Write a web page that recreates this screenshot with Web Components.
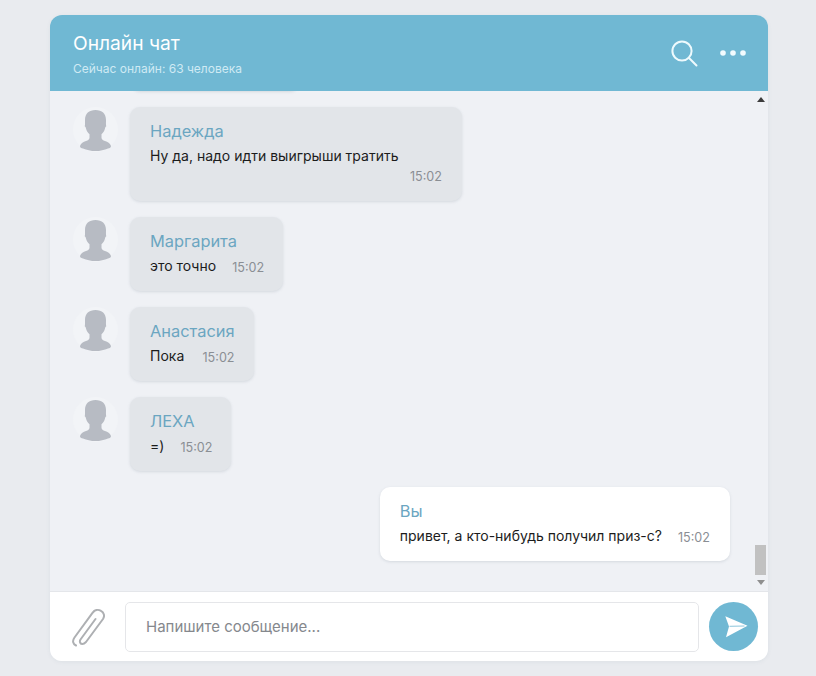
<!DOCTYPE html>
<html lang="ru"><head><meta charset="utf-8"><title>Онлайн чат</title>
<style>
html,body{margin:0;height:100%}
body{background:#e9ebef;font-family:Inter,"Liberation Sans",sans-serif;padding:15px 48px 15px 50px;box-sizing:border-box;overflow:hidden}
</style></head><body>
<chat-window>
  <chat-header slot="header" title-text="Онлайн чат" sub="Сейчас онлайн: 63 человека"></chat-header>
  <chat-bubble ghost></chat-bubble>
  <chat-bubble name="Надежда" time="15:02" wide>Ну да, надо идти выигрыши тратить</chat-bubble>
  <chat-bubble name="Маргарита" time="15:02">это точно</chat-bubble>
  <chat-bubble name="Анастасия" time="15:02">Пока</chat-bubble>
  <chat-bubble name="ЛЕХА" time="15:02">=)</chat-bubble>
  <chat-bubble name="Вы" time="15:02" own>привет, а кто-нибудь получил приз-с?</chat-bubble>
  <chat-composer slot="footer" placeholder="Напишите сообщение..."></chat-composer>
</chat-window>
<script>
const FONT='Inter,"Liberation Sans",sans-serif';
function el(name, html){
  customElements.define(name, class extends HTMLElement{
    connectedCallback(){
      if(this.shadowRoot) return;
      const s=this.attachShadow({mode:'open'});
      s.innerHTML=typeof html==='function'?html(this):html;
    }
  });
}
el('chat-window',`<style>
:host{display:flex;flex-direction:column;height:646px;width:718px;border-radius:12px;overflow:hidden;background:#eff1f5;box-shadow:0 1px 4px rgba(90,110,130,.08)}
.body{flex:1;min-height:0;display:flex}
.list{flex:1;min-width:0;display:flex;flex-direction:column;justify-content:flex-end;gap:16px;padding:0 23px 30px;overflow:hidden;box-sizing:border-box}
.bar{width:15px;flex:none;display:flex;flex-direction:column;align-items:center;box-sizing:border-box}
.up{margin-top:6px;width:0;height:0;border:4px solid transparent;border-top:0;border-bottom:5px solid #3c3c3c}
.sp{flex:1}
.thumb{width:11px;height:30px;background:#c1c1c1;margin-bottom:5px}
.down{margin-bottom:6px;width:0;height:0;border:4px solid transparent;border-bottom:0;border-top:5px solid #8f8f8f}
</style>
<slot name="header"></slot>
<div class="body"><div class="list"><slot></slot></div>
<div class="bar"><div class="up"></div><div class="sp"></div><div class="thumb"></div><div class="down"></div></div></div>
<slot name="footer"></slot>`);
el('chat-header',h=>`<style>
:host{display:flex;align-items:center;height:76px;flex:none;background:#70b8d3;color:#fff;padding:0 22px 0 23px;box-sizing:border-box}
.t{flex:1;display:flex;flex-direction:column;padding-top:1px}
h1{margin:0;font:400 19.2px/24px ${FONT}}
p{margin:6px 0 0;font:400 12px/16px ${FONT};color:#cfeaf3}
.ic{display:flex;align-items:center;gap:22px}
svg{display:block}
</style>
<div class="t"><h1>${h.getAttribute('title-text')}</h1><p>${h.getAttribute('sub')}</p></div>
<div class="ic">
<svg width="27" height="27" viewBox="0 0 27 27" fill="none" stroke="#eefafd" stroke-width="2"><circle cx="11" cy="11" r="9.6"/><path d="M17.8 17.8 25.500 25.500" stroke-linecap="round"/></svg>
<svg width="26" height="6" viewBox="0 0 26 6" fill="#f2fbfe"><circle cx="3" cy="3" r="2.8"/><circle cx="13" cy="3" r="2.8"/><circle cx="23" cy="3" r="2.8"/></svg>
</div>`);
el('chat-avatar',`<style>
:host{display:block;width:45px;height:45px;border-radius:50%;background:#f2f4f7;flex:none}
svg{display:block}
</style><svg width="45" height="45" viewBox="0 0 45 45" fill="#b7bbc3"><path d="M22.5 3c-6.500 0-10.500 3.500-10.500 10 0 3 .2 5-.3 6.200 1 .5 1 1.300 1.300 2.300.6 2.400 1.800 4.300 3.500 5.800v3.400c0 1.600-1.500 2.500-3.500 3.300-2.800 1.100-5 2.300-5.800 4.500-.4 1-.3 2.500 2.800 2.900 3.500 1.500 8 2.600 12.500 2.600s9-1.100 12.500-2.600c3.100-.4 3.200-1.900 2.800-2.900-.8-2.200-3-3.400-5.800-4.500-2-.8-3.500-1.700-3.500-3.300v-3.400c1.700-1.500 2.900-3.400 3.500-5.800.3-1 .3-1.800 1.300-2.300-.5-1.200-.3-3.200-.3-6.200C33 6.500 29 3 22.500 3z"/></svg>`);
el('chat-bubble',h=>{
 const own=h.hasAttribute('own'), ghost=h.hasAttribute('ghost'), wide=h.hasAttribute('wide');
 return `<style>
:host{display:flex;flex:none;gap:12px;justify-content:${own?'flex-end':'flex-start'}}
.b{box-sizing:border-box;${wide?'width:332px;':''}${ghost?'width:170px;':''}min-height:${wide?94:74}px;padding:14px ${own||wide?20:19}px 0 20px;border-radius:10px;background:${own?'#fff':'#e2e5e9'};box-shadow:0 1px 3px rgba(120,130,145,.22);font:400 14px/20px ${FONT}}
.n{color:#6ba6c1;font-size:16.4px;line-height:20px;margin-bottom:5px}
.row{display:flex;flex-wrap:wrap}
.x{color:#1c1c1c}
.time{margin-left:auto;padding-left:16px;color:#8a8e94;font-size:12.6px;line-height:20px;position:relative;top:${wide?1:2}px}
</style>${own?'':'<chat-avatar></chat-avatar>'}
<div class="b">${ghost?'':`<div class="n">${h.getAttribute('name')}</div><div class="row"><div class="x"><slot></slot></div><div class="time">${h.getAttribute('time')}</div></div>`}</div>`});
el('chat-composer',h=>`<style>
:host{display:flex;align-items:center;height:70px;flex:none;background:#fff;border-top:1px solid #e4e6ea;box-sizing:border-box;padding:0 10px 0 21px}
.clip{flex:none;width:34px;margin-right:20px;display:block}
.i{flex:1;height:50px;box-sizing:border-box;border:1px solid #e5e6e9;border-radius:5px;padding:0 20px;display:flex;align-items:center;font:400 15px ${FONT};color:#85888d;background:#fff}
.s{flex:none;width:49px;height:49px;border-radius:50%;background:#70b8d3;margin-left:10px}
.s svg{display:block}
</style>
<svg class="clip" width="34" height="40" viewBox="0 0 34 40" fill="none" stroke="#aeb0b3" stroke-width="2" stroke-linecap="round" stroke-linejoin="round"><path d="M24.500 12 9.500 32.500C8 35 9.500 37 11.500 37 13 37 14 36 15 35L32 12C34 9 33 5.500 30 3.800 27 2 23.500 3 21.500 5.800L3.500 30.500C1 34 2 37 5 38.500"/></svg>
<div class="i">${h.getAttribute('placeholder')}</div>
<div class="s"><svg width="49" height="49" viewBox="0 0 49 49"><path fill="#fff" d="M16.300 14.300 38.500 23.800 17 35.300 20 24.500z"/><path d="M20.500 24.300 35.500 24" stroke="#70b8d3" stroke-width=".8" fill="none"/></svg></div>`);
</script>
</body></html>
